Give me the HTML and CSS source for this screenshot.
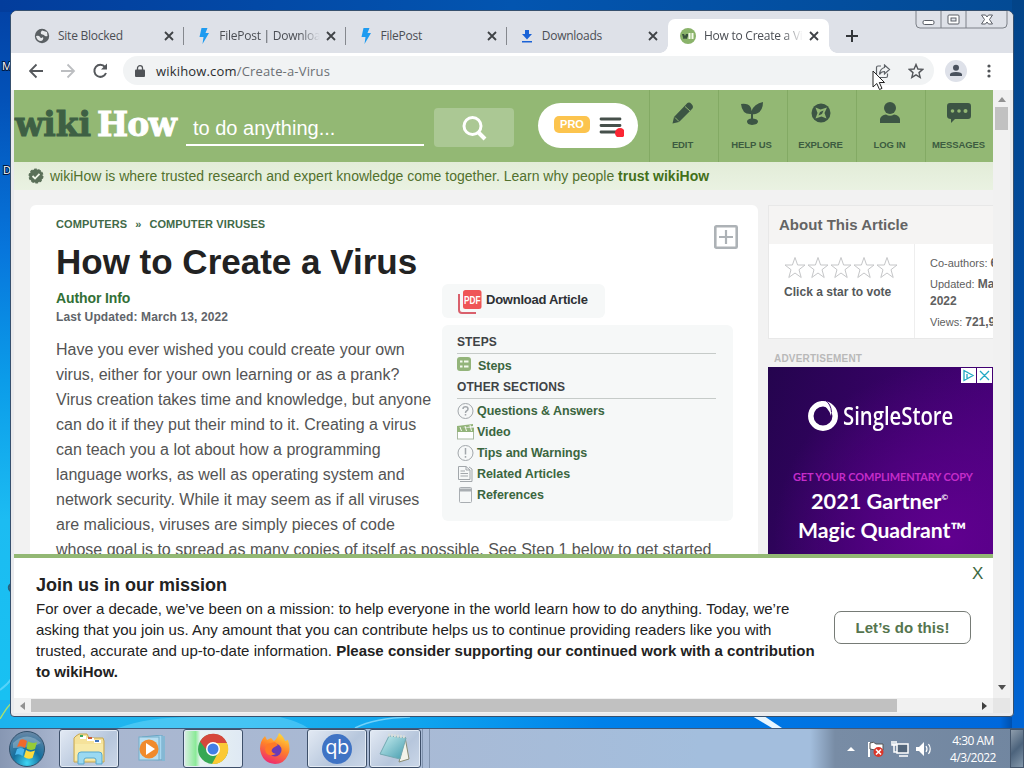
FILE: index.html
```html
<!DOCTYPE html>
<html lang="en">
<head>
<meta charset="utf-8">
<title>How to Create a Virus</title>
<link rel="stylesheet" href="styles.css">
</head>
<body>
<div class="desktop">
  <svg class="wallpaper" width="1024" height="768" viewBox="0 0 1024 768">
    <path d="M0 719Q6 708 14 700" stroke="#a8e070" stroke-width="1.5" fill="none"/>
    <path d="M0 690Q8 684 12 678" stroke="#7fe0ff" stroke-width="2" fill="none" opacity=".6"/>
    <path d="M118 728Q150 716 200 717H280Q300 722 308 728Z" fill="#8ee6ff" opacity=".35"/>
    <path d="M355 728Q375 718 410 717" stroke="#9ae2ff" stroke-width="1.5" fill="none" opacity=".7"/>
    <path d="M752 716L764 716 782 728 772 728Z" fill="#e8f6ff"/>
    <text class="shortcut" x="2" y="70">M</text>
    <text class="shortcut" x="3" y="174">D</text>
    <path d="M12 584Q8 585 9 589L12 593" stroke="#28607c" stroke-width="2" fill="none"/>
  </svg>

  <main class="window">
    <div class="tabstrip">
      <div class="tab">
        <svg class="favicon" viewBox="0 0 16 16"><circle cx="8" cy="8" r="7.2" fill="#5a5f63"/><path d="M2 8Q5 7 6 9T9 9Q10 12 7 13Q3 13 2 8ZM8 2.5L13 4 13.5 8Q11 9 10 7L7 6Q6 4 8 2.5Z" fill="#e6e8eb"/></svg>
        <span class="tab-title">Site Blocked</span>
        <svg class="tab-close" viewBox="0 0 10 10"><path d="M1 1L9 9M9 1L1 9"/></svg>
      </div>
      <div class="tab">
        <svg class="favicon" viewBox="0 0 16 16"><path d="M6.500 0H12.500L10.500 5H14L7.500 16 8.500 9H4.500Z" fill="#1e9bf0"/></svg>
        <span class="tab-title fade">FilePost | Download</span>
        <svg class="tab-close" viewBox="0 0 10 10"><path d="M1 1L9 9M9 1L1 9"/></svg>
      </div>
      <div class="tab">
        <svg class="favicon" viewBox="0 0 16 16"><path d="M6.500 0H12.500L10.500 5H14L7.500 16 8.500 9H4.500Z" fill="#1e9bf0"/></svg>
        <span class="tab-title">FilePost</span>
        <svg class="tab-close" viewBox="0 0 10 10"><path d="M1 1L9 9M9 1L1 9"/></svg>
      </div>
      <div class="tab last">
        <svg class="favicon" viewBox="0 0 16 16"><path d="M7 2H11V6H14L9 11.500 4 6H7ZM4 13H14V14.500H4Z" fill="#1a62d6"/></svg>
        <span class="tab-title">Downloads</span>
        <svg class="tab-close" viewBox="0 0 10 10"><path d="M1 1L9 9M9 1L1 9"/></svg>
      </div>
      <div class="tab active">
        <svg class="favicon" viewBox="0 0 16 16"><circle cx="8" cy="8" r="8" fill="#8ab36a"/><path d="M2 6H4L5 8 6 6H8V8L6.500 11H5.500L5 9.500 4.500 11H3.500Z" fill="#39523c"/><path d="M8.500 5H10.500V11H8.500ZM11.500 5H13.500V11H11.500Z" fill="#f4fbe9"/></svg>
        <span class="tab-title fade">How to Create a Virus</span>
        <svg class="tab-close" viewBox="0 0 10 10"><path d="M1 1L9 9M9 1L1 9"/></svg>
      </div>
      <svg class="new-tab" width="12" height="12" viewBox="0 0 12 12"><path d="M6 0V12M0 6H12" stroke="#33363a" stroke-width="2"/></svg>
      <svg class="caption" width="94" height="18" viewBox="0 0 94 18">
        <path d="M1 0V13Q1 17 5 17H88Q92 17 92 13V0M26 0V17M51 0V17" fill="none" stroke="#7c8088"/>
        <rect x="8" y="9.500" width="11" height="4" rx="1.500" fill="#fff" stroke="#5b5f67"/>
        <rect x="33" y="4" width="11" height="9" rx="1" fill="#fff" stroke="#5b5f67"/><rect x="36" y="7" width="5" height="3" fill="#e4e7ee" stroke="#5b5f67"/>
        <path d="M66.500 4H70.500L72 6 73.500 4H77.500L74.500 8.500 77.500 13H73.500L72 11 70.500 13H66.500L69.500 8.500Z" fill="#fff" stroke="#5b5f67"/>
      </svg>
    </div>

    <div class="toolbar">
      <svg class="nav-buttons" width="94" height="18" viewBox="0 0 94 18" fill="none" stroke-width="1.800">
        <path d="M14 9H1M7.500 2.500L1 9 7.500 15.500" stroke="#55585c"/>
        <path d="M32 9H45M38.500 2.500L45 9 38.500 15.500" stroke="#bcbec1"/>
        <path d="M76 5A6 6 0 1 0 77 11" stroke="#55585c" stroke-width="2"/><path d="M78 1.500V7.500H72Z" fill="#55585c"/>
      </svg>
      <div class="omnibox">
        <svg width="10" height="12" viewBox="0 0 10 12"><path d="M1 4.500H9Q10 4.500 10 5.500V11Q10 12 9 12H1Q0 12 0 11V5.500Q0 4.500 1 4.500Z" fill="#505357"/><path d="M2.500 5V3A2.500 2.300 0 0 1 7.500 3V5" fill="none" stroke="#505357" stroke-width="1.300"/></svg>
        <span class="url">wikihow.com<span class="path">/Create-a-Virus</span></span>
        <svg class="share" width="16" height="16" viewBox="0 0 16 16" fill="none" stroke="#5f6368" stroke-width="1.200"><path d="M6 3H3Q1.500 3 1.500 4.500V13Q1.500 14.500 3 14.500H11Q12.500 14.500 12.500 13V10.500"/><path d="M9.500 2L14.500 6.500 9.500 11V8.500Q6 8.500 4.500 11.500Q5 5.500 9.500 4.500Z"/></svg>
        <svg width="16" height="16" viewBox="0 0 16 16"><path d="M8 1.500L9.900 6 14.700 6.400 11 9.600 12.200 14.400 8 11.800 3.800 14.400 5 9.600 1.300 6.400 6.100 6Z" fill="none" stroke="#55585c" stroke-width="1.400"/></svg>
      </div>
      <svg class="profile" width="22" height="22" viewBox="0 0 22 22"><circle cx="11" cy="11" r="11" fill="#dee1e9"/><circle cx="11" cy="7.700" r="3" fill="#4a525e"/><path d="M5 16V14.500Q5 12 11 12T17 14.500V16Z" fill="#4a525e"/></svg>
      <svg width="4" height="14" viewBox="0 0 4 14" fill="#505357"><circle cx="2" cy="2" r="1.600"/><circle cx="2" cy="7" r="1.600"/><circle cx="2" cy="12" r="1.600"/></svg>
    </div>

    <div class="viewport">
      <div class="page">
        <header class="site-header">
          <div class="logo"><span class="wiki">wiki</span><span class="how">How</span></div>
          <div class="search-field">to do anything...</div>
          <div class="search-button"><svg width="26" height="26" viewBox="0 0 26 26" fill="none" stroke="#fff"><circle cx="11.500" cy="11" r="8.500" stroke-width="3"/><path d="M17.500 17.500L24 24" stroke-width="4"/></svg></div>
          <div class="pro-pill">
            <span class="pro">PRO</span>
            <svg width="26" height="22" viewBox="0 0 26 22"><path d="M3 4H22M3 10.500H22M3 17H19" stroke="#46504b" stroke-width="2.800" stroke-linecap="round"/><circle cx="22" cy="18" r="5" fill="#fb2633"/></svg>
          </div>
          <nav class="site-nav">
            <div class="nav-item"><svg viewBox="0 0 24 24"><path d="M1.500 22.500L3 16 15 3.500Q17.500 0 20.500 3T20.500 8.500L8 21Z" fill="#3c5544"/><path d="M4 16.500L8 20.500M14 5.500L19 10" stroke="#93b874" stroke-width="1"/></svg><span>EDIT</span></div>
            <div class="nav-item"><svg viewBox="0 0 24 24" fill="#3c5544"><path d="M1 3Q8 2 10.500 6 11.500 8 11.500 10 14 3 23 1 23 10 17 12.500 15 13.500 13 13.200V17.500Q18 18 18 20.500 18 23.500 12 24 7 23.500 7 20.500 7 18.500 11 17.500V13Q2 13.500 1 3Z"/></svg><span>HELP US</span></div>
            <div class="nav-item"><svg viewBox="0 0 24 24"><circle cx="12" cy="12" r="9.500" fill="#3c5544"/><path d="M6.500 6.500L11.500 8.500 18 6.500 15.500 12 17.500 17.500 12.500 15.500 6.500 17.500 8.500 12Z" fill="#93b874"/><path d="M9.500 14.500L11 11 14.500 9.500 13 13Z" fill="#3c5544"/></svg><span>EXPLORE</span></div>
            <div class="nav-item"><svg viewBox="0 0 24 24" fill="#3c5544"><circle cx="12" cy="7" r="6"/><path d="M2 22V18Q3 14 8 13.500 12 16 16 13.500 21 14 22 18V22Z"/></svg><span>LOG IN</span></div>
            <div class="nav-item"><svg viewBox="0 0 24 24"><path d="M3 2H21Q24 2 24 5V15Q24 18 21 18H8L4 22V18Q0 18 0 15V5Q0 2 3 2Z" fill="#3c5544"/><g fill="#93b874"><circle cx="5.500" cy="10" r="1.800"/><circle cx="12" cy="10" r="1.800"/><circle cx="18.500" cy="10" r="2"/></g></svg><span>MESSAGES</span></div>
          </nav>
        </header>
        <div class="trust-bar">
          <svg width="16" height="16" viewBox="0 0 16 16"><circle cx="8" cy="8" r="6.800" fill="#5a7058" stroke="#5a7058" stroke-width="1.400" stroke-dasharray="2.700 1.570"/><path d="M4.500 8L7 10.500 11.500 5.800" fill="none" stroke="#eef5e6" stroke-width="1.800"/></svg>
          <span>wikiHow is where trusted research and expert knowledge come together. Learn why people <b>trust wikiHow</b></span>
        </div>
        <div class="content">
          <article class="card">
            <div class="breadcrumb">COMPUTERS<i>»</i>COMPUTER VIRUSES</div>
            <div class="title-row">
              <h1>How to Create a Virus</h1>
              <svg class="expand" width="24" height="24" viewBox="0 0 24 24" fill="none" stroke="#adb2b6"><rect x="1.300" y="1.300" width="21.400" height="21.400" rx="1" stroke-width="2.600"/><path d="M12 5V19M5 12H19" stroke-width="2.200"/></svg>
            </div>
            <div class="columns">
              <div class="intro">
                <div class="author">Author Info</div>
                <div class="updated">Last Updated: March 13, 2022</div>
                <p>Have you ever wished you could create your own<br>virus, either for your own learning or as a prank?<br>Virus creation takes time and knowledge, but anyone<br>can do it if they put their mind to it. Creating a virus<br>can teach you a lot about how a programming<br>language works, as well as operating system and<br>network security. While it may seem as if all viruses<br>are malicious, viruses are simply pieces of code<br>whose goal is to spread as many copies of itself as possible. See Step 1 below to get started</p>
              </div>
              <div class="side">
                <div class="download">
                  <svg width="24" height="24" viewBox="0 0 24 24"><path d="M1 4V20Q1 23 4 23H18" fill="none" stroke="#d9606c" stroke-width="2"/><rect x="5" y="0" width="18.500" height="19" rx="2.500" fill="#ef5557"/><text class="pdf" x="6" y="13.500" textLength="16.500" lengthAdjust="spacingAndGlyphs">PDF</text></svg>
                  <span>Download Article</span>
                </div>
                <div class="toc">
                  <h2>STEPS</h2>
                  <a class="steps"><svg viewBox="0 0 18 18"><rect x="0" y="0" width="14" height="14" rx="3" fill="#93b47a"/><path d="M3 4.500H5.500M7 4.500H11.500M3 9.500H5.500M7 9.500H11.500" stroke="#f5faef" stroke-width="2"/></svg>Steps</a>
                  <h2 class="other">OTHER SECTIONS</h2>
                  <a><svg viewBox="0 0 18 18" fill="none" stroke="#a2a7ab"><circle cx="8.500" cy="9" r="7.500"/><path d="M6 7Q6 4.800 8.500 4.800T11 7Q11 8.300 9.500 9 8.500 9.500 8.500 11" stroke-width="1.500"/><path d="M8.500 12V13.500" stroke-width="1.500"/></svg>Questions &amp; Answers</a>
                  <a><svg viewBox="0 0 18 18"><rect x=".5" y="5" width="16" height="11" fill="#fff" stroke="#a9b9a0"/><path d="M0 3L16 1V3L5 5H17V9H0Z" fill="#93b47a"/><path d="M3 4L4.500 8M8 3L9.500 8M13 2L14.500 8" stroke="#f5faef"/></svg>Video</a>
                  <a><svg viewBox="0 0 18 18" fill="none" stroke="#a2a7ab"><circle cx="8.500" cy="9" r="7.500"/><path d="M8.500 4V10.500M8.500 12V13.800" stroke-width="1.500"/></svg>Tips and Warnings</a>
                  <a><svg viewBox="0 0 18 18" fill="none" stroke="#a2a7ab"><path d="M1.500 1.500H9L13 5V14.500H1.500ZM9 1.500V5H13M3.500 6H8M3.500 8.500H11M3.500 11H11M3 16.500H15V4L12 2"/></svg>Related Articles</a>
                  <a><svg viewBox="0 0 18 18" fill="none" stroke="#a9aeb2"><rect x="2.500" y="1.500" width="12" height="15" rx="1"/><path d="M2.500 4H14.500" stroke-width="3"/></svg>References</a>
                </div>
              </div>
            </div>
          </article>
          <aside class="sidebar">
            <section class="about">
              <h3>About This Article</h3>
              <div class="about-body">
                <div class="rating">
                  <svg width="116" height="24" viewBox="0 0 116 24" fill="#fff" stroke="#c5c6c8"><path id="star" d="M12 1.500L14.600 9H22L16 13.700 18.200 21.500 12 17 5.800 21.500 8 13.700 2 9H9.400Z"/><use href="#star" x="23"/><use href="#star" x="46"/><use href="#star" x="69"/><use href="#star" x="92"/></svg>
                  <div>Click a star to vote</div>
                </div>
                <div class="stats"><div>Co-authors: <b>64</b></div><div>Updated: <b>March 13,<br>2022</b></div><div>Views: <b>721,963</b></div></div>
              </div>
            </section>
            <div class="ad-label">ADVERTISEMENT</div>
            <div class="ad">
              <svg class="ad-choices" width="33" height="15" viewBox="0 0 33 15"><path d="M0 0H15V15H0ZM16 0H31V15H16Z" fill="#fff"/><path d="M3 2.500V12.500L12 7.500ZM6 6V11M6 3.500V5M19 3L28 12M28 3L19 12" fill="none" stroke="#20a8c4" stroke-width="1.300"/></svg>
              <div class="ad-brand"><svg width="32" height="32" viewBox="0 0 32 32"><circle cx="16" cy="16" r="12.200" fill="none" stroke="#fff" stroke-width="5.500"/><path d="M14 1Q26 4 24 16Q21 6 14 5Z" fill="#fff"/><path d="M18 0Q24 4 24.500 12" stroke="#3e0870" fill="none"/></svg><span>SingleStore</span></div>
              <div class="ad-kicker">GET YOUR COMPLIMENTARY COPY</div>
              <div class="ad-line one">2021 Gartner<sup>©</sup></div>
              <div class="ad-line two">Magic Quadrant™</div>
            </div>
          </aside>
        </div>
        <section class="banner">
          <div class="message">
            <h2>Join us in our mission</h2>
            <p>For over a decade, we’ve been on a mission: to help everyone in the world learn how to do anything. Today, we’re<br>asking that you join us. Any amount that you can contribute helps us to continue providing readers like you with<br>trusted, accurate and up-to-date information. <b>Please consider supporting our continued work with a contribution<br>to wikiHow.</b></p>
          </div>
          <div class="cta">Let’s do this!</div>
          <div class="dismiss">X</div>
        </section>
      </div>
      <div class="vscroll"><svg width="8" height="5" viewBox="0 0 8 5"><path d="M0 5L4 0 8 5Z" fill="#929292"/></svg><div class="vthumb"></div><svg class="down" width="8" height="5" viewBox="0 0 8 5"><path d="M0 0H8L4 5Z" fill="#505050"/></svg></div>
      <div class="hscroll"><svg width="5" height="8" viewBox="0 0 5 8"><path d="M5 0V8L0 4Z" fill="#929292"/></svg><div class="hthumb"></div><svg class="right" width="5" height="8" viewBox="0 0 5 8"><path d="M0 0V8L5 4Z" fill="#404040"/></svg></div>
      <div class="corner"></div>
    </div>
  </main>

  <footer class="taskbar">
    <div class="start"><svg width="38" height="38" viewBox="0 0 38 38"><defs><radialGradient id="orb" cx=".5" cy=".9" r=".9"><stop offset="0" stop-color="#3ed6f4"/><stop offset=".45" stop-color="#156f9e"/><stop offset="1" stop-color="#6a88a6"/></radialGradient></defs><circle cx="19" cy="19" r="17.500" fill="url(#orb)" stroke="#31506b"/><path d="M5 13Q19 0 33 13Q25 18 5 18Z" fill="#fff" opacity=".25"/><path d="M12 10Q15 8 19 11L17 18Q13 15 9 17Z" fill="#f0692c"/><path d="M20 11.500Q25 14 29 12L27 19Q22 21 18.500 18.500Z" fill="#96cb38"/><path d="M9 19Q13 17 16.500 19.500L14.500 26Q11 23 7 25Z" fill="#4ab8ef"/><path d="M18 20Q22 23 27 20.500L24.500 28Q20 30 16 27Z" fill="#fddb3d"/></svg></div>
    <div class="task folder open"><svg width="34" height="32" viewBox="0 0 34 32"><path d="M4 3L7 1H15L17 5H31L32 8V29H2V5Z" fill="#f5e29a" stroke="#c7a64c"/><path d="M8 3H14V6H8ZM15 5H22V8H15ZM22 7H29V10H22Z" fill="#fff"/><path d="M8 2H11V4H8Z" fill="#42a75c"/><path d="M16 4H20V6H16Z" fill="#cf5d36"/><path d="M23 7H27V9H23Z" fill="#4274bb"/><path d="M3 11H31V27H3Z" fill="#f8eaa9"/><path d="M6 31V22Q6 19 9 19H27Q30 19 30 22V31H24V27Q24 25 22 25H14Q12 25 12 27V31Z" fill="#9ad9f1" stroke="#56a8cf"/></svg></div>
    <div class="task plain media"><svg width="30" height="28" viewBox="0 0 30 28"><path d="M4 2L24 0V25L4 24Z" fill="#a9d7ef" stroke="#6aa4c4"/><path d="M24 1H27V26H24Z" fill="#84b8d4"/><rect x="1" y="2" width="20" height="23" fill="#b8def1" stroke="#72aeca"/><circle cx="11" cy="14" r="9.500" fill="#f08a2c"/><path d="M8 8V20L17 14Z" fill="#fff"/></svg></div>
    <div class="task chrome open"><svg width="32" height="32" viewBox="0 0 32 32"><circle cx="16" cy="16" r="15" fill="#36a853"/><path d="M3 8.500A15 15 0 0 1 30 10H16Q10 10 9.500 17Z" fill="#d6473b"/><path d="M30 10A15 15 0 0 1 15 31L22 18Q23 13 18 10Z" fill="#fbc934"/><circle cx="16" cy="16" r="7" fill="#fff"/><circle cx="16" cy="16" r="5.500" fill="#427fe6"/></svg></div>
    <div class="task plain"><svg width="32" height="34" viewBox="0 0 32 34"><defs><linearGradient id="fox" x1=".8" y1="0" x2=".4" y2="1"><stop offset="0" stop-color="#ffe23d"/><stop offset=".5" stop-color="#ff812b"/><stop offset="1" stop-color="#ef2b6e"/></linearGradient></defs><path d="M1 17Q1 9 6 4L8 8 12 6 15 9Q18 7 20 1Q25 5 26 9L29 8Q32 18 29 23Q25 32 16 32Q3 31 1 17Z" fill="url(#fox)"/><circle cx="16" cy="18" r="6.500" fill="#6a3cb6"/><path d="M8 12L16 10 19 13 14 16Q10 20 17 22Q7 26 6 17Z" fill="#ff7a26"/></svg></div>
    <div class="task open"><div class="qb">qb</div></div>
    <div class="task notepad open"><svg width="34" height="32" viewBox="0 0 34 32"><defs><linearGradient id="note" x1="0" y1="0" x2="1" y2="1"><stop offset="0" stop-color="#c9eff1"/><stop offset="1" stop-color="#459cae"/></linearGradient></defs><path d="M27 4L31 26 21 29Z" fill="#f3f3e9" stroke="#888a72"/><path d="M11 3L28 5 22 26 2 21Z" fill="url(#note)" stroke="#73a9b2"/><path d="M10 2L28 4" stroke="#d8dedb" stroke-width="3" stroke-dasharray="2 1"/></svg></div>
    <div class="stack-edge"></div>
    <div class="tray">
      <svg width="86" height="18" viewBox="0 0 86 18"><path d="M0 11L4 7 8 11Z" fill="#fff"/><path d="M22 2V17" stroke="#fff" stroke-width="2"/><path d="M23 3Q27 1 29 4H36V10H28L23 9Z" fill="#fff" stroke="#555"/><circle cx="31.500" cy="12" r="5" fill="#dc3528"/><path d="M29 9.500L34 14.500M34 9.500L29 14.500" stroke="#fff" stroke-width="1.600"/><rect x="50" y="4" width="11" height="9" fill="#53667b" stroke="#fff" stroke-width="1.500"/><path d="M52 16H61M47 1V7M45 1V5H49V1M47 7V12H50" stroke="#fff" stroke-width="1.500" fill="none"/><path d="M69 7H72L77 2V16L72 11H69Z" fill="#fff"/><path d="M79 6Q81 9 79 12M81.500 4Q85 9 81.500 14" fill="none" stroke="#fff" stroke-width="1.200"/></svg>
      <div class="clock">4:30 AM<br>4/3/2022</div>
      <div class="show-desktop"></div>
    </div>
  </footer>
  <svg class="cursor" width="14" height="21" viewBox="0 0 14 21"><path d="M1 1V17L4.800 13.500 7.500 19.500 10 18.400 7.300 12.500H12.500Z" fill="#fff" stroke="#222"/></svg>
</div>
</body>
</html>
```
FILE: styles.css
```css
* { box-sizing: border-box; }
body { margin: 0; font-family: "Liberation Sans", Arial, sans-serif; }
svg { flex: none; display: block; }
h1, h2, h3, p { margin: 0; }
.desktop {
  position: relative; width: 1024px; height: 768px; overflow: hidden;
  display: flex; flex-direction: column; justify-content: flex-end;
  background:
    linear-gradient(90deg, transparent 1000px, #0050ae 1012px),
    linear-gradient(90deg, #1cb3ee 0, #22b6ee 200px, #0fa4ee 420px, #0081ea 600px, #0068dc 1000px) 0 700px / 100% 68px no-repeat,
    linear-gradient(180deg, #0341a4 0, #0352b8 100px, #0776dc 250px, #0b9ce9 380px, #1cbcf2 520px, #18c1f2 700px);
}
.desktop::before {
  content: ""; position: absolute; left: 0; top: 0; width: 100%; height: 12px;
  background: linear-gradient(90deg, #033d9c, #0355b0 50%, #034a94);
}
.desktop::after {
  content: ""; position: absolute; left: 1012px; top: 0; width: 12px; height: 728px;
  background: linear-gradient(#034488, #0050ae 60%, #0065d6);
}
.wallpaper { position: absolute; left: 0; top: 0; }
.shortcut { font: 11px "Open Sans", sans-serif; fill: #fff; stroke: #001a44; stroke-width: 2px; paint-order: stroke; }

/* Browser window */
.window {
  position: absolute; z-index: 1; left: 10px; top: 10px; width: 1004px; height: 707px;
  border: 1px solid #36506e; border-radius: 7px 7px 4px 4px; background: #e9eaed; padding: 0 3px;
  display: flex; flex-direction: column; overflow: hidden; font-family: "Liberation Sans", sans-serif;
}
.tabstrip { flex: none; display: flex; height: 42px; margin: 0 -3px; padding: 8px 0 0 12px; background: #dee1e8; position: relative; }
.tab {
  flex: none; display: flex; align-items: center; gap: 8px; width: 161.25px; padding: 0 10px 1px 11px; position: relative;
  font: 12px "Open Sans", sans-serif; letter-spacing: -.25px; color: #4b4e54;
}
.tab:not(.last):not(.active)::after { content: ""; position: absolute; right: 0; top: 8px; width: 1px; height: 18px; background: #85888e; }
.tab.active { background: #fff; border-radius: 7px 7px 0 0; padding-left: 12px; }
.tab.active::before, .tab.active::after { content: ""; position: absolute; bottom: 0; width: 8px; height: 8px; }
.tab.active::before { left: -8px; background: radial-gradient(circle at 0 0, transparent 7.500px, #fff 8px); }
.tab.active::after { right: -8px; background: radial-gradient(circle at 100% 0, transparent 7.500px, #fff 8px); }
.favicon { width: 16px; height: 16px; }
.tab-title { flex: 1; overflow: hidden; white-space: nowrap; }
.tab-title.fade { margin-right: -4px; -webkit-mask-image: linear-gradient(90deg, #000 78%, transparent 98%); mask-image: linear-gradient(90deg, #000 78%, transparent 98%); }
.tab-close { width: 10px; height: 10px; fill: none; stroke: #3f4246; stroke-width: 1.800px; }
.new-tab { margin: 11px 0 0 17px; }
.caption { position: absolute; right: 4px; top: 0; }
.toolbar { flex: none; display: flex; align-items: center; height: 37px; margin: 0 -3px; padding: 0 22px 2px 18px; background: #fff; }
.omnibox { flex: 1; display: flex; align-items: center; height: 29px; margin: 0 11px 0 0; padding: 0 10px 0 12px; border-radius: 15px; background: #f1f3f4; }
.url { margin-left: 11px; font: 13px "Open Sans", sans-serif; color: #2b2d30; letter-spacing: .17px; }
.path { color: #6c7074; }
.share { margin: 0 17px 0 auto; }
.profile { margin-right: 20px; }

.viewport { flex: none; display: grid; grid-template-columns: 979px 17px; grid-template-rows: 608px 15px; }
.page { display: flex; flex-direction: column; overflow: hidden; background: #f2f2f2; }
.site-header { flex: none; display: flex; height: 72px; background: #93b874; }
.logo { flex: none; width: 172px; padding: 16px 0 0 1px; font: bold 33px/38px "DejaVu Serif", serif; white-space: nowrap; letter-spacing: -.8px; -webkit-text-stroke: .9px currentColor; }
.wiki { color: #3e6044; margin-right: 6px; letter-spacing: -.1px; }
.how { color: #fff; }
.search-field { flex: none; width: 238px; height: 36px; margin-top: 20px; padding-left: 7px; border-bottom: 2px solid #fff; color: #fff; font-size: 20px; line-height: 36px; }
.search-button { flex: none; display: flex; align-items: center; justify-content: center; width: 80px; height: 39px; margin: 18px 0 0 10px; border-radius: 4px; background: #abc894; }
.pro-pill { flex: none; display: flex; align-items: center; width: 100px; height: 45px; margin: 13px 11px 0 24px; padding-left: 16px; border-radius: 23px; background: #fff; }
.pro { width: 36px; height: 17px; margin: 0 8px 2px 0; border-radius: 5px; background: #fcc44e; color: #fff; font-size: 11px; line-height: 17px; text-align: center; font-weight: bold; }
.site-nav { flex: none; display: flex; }
.nav-item { width: 69px; padding: 11px 3px 0 0; border-left: 1px solid #83aa64; display: flex; flex-direction: column; align-items: center; gap: 14px; color: #3c5c40; font-size: 9.500px; font-weight: bold; line-height: 12px; letter-spacing: -.1px; white-space: nowrap; }
.nav-item svg { width: 24px; height: 24px; }
.trust-bar { flex: none; display: flex; align-items: center; gap: 6px; height: 28px; padding-left: 14px; background: linear-gradient(#e2ecd8, #eaf2e2); color: #52712d; font-size: 14px; white-space: nowrap; }
.trust-bar b { color: #43701a; }
.content { flex: 1; min-height: 0; display: flex; gap: 10px; padding: 15px 0 0 16px; overflow: hidden; }
.card { flex: none; width: 728px; height: 420px; padding: 12px 20px 0 26px; border-radius: 6px; background: #fff; }
.breadcrumb { height: 15px; color: #416a48; font-size: 11px; font-weight: bold; line-height: 14px; letter-spacing: .1px; }
.breadcrumb i { margin: 0 8px; font-style: normal; }
.title-row { display: flex; justify-content: space-between; height: 52px; }
.title-row h1 { color: #222; font-size: 35px; line-height: 60px; white-space: nowrap; }
.expand { margin-top: -7px; }
.columns { display: grid; grid-template-columns: 386px 291px; }
.author { margin-top: 6px; color: #327036; font-size: 14px; font-weight: bold; line-height: 16px; letter-spacing: -.1px; }
.updated { margin-top: 4px; color: #60646a; font-size: 12px; font-weight: bold; line-height: 14px; letter-spacing: .12px; }
.intro p { margin-top: 13px; color: #545454; font-size: 16px; line-height: 25px; white-space: nowrap; }
.download { display: flex; gap: 4px; width: 163px; height: 34px; padding: 6px 0 0 16px; border-radius: 6px; background: #f6f8f8; color: #2d3034; font-size: 13px; font-weight: bold; line-height: 20px; white-space: nowrap; letter-spacing: -.25px; }
.pdf { font: bold 10px "Liberation Sans", sans-serif; fill: #fff; letter-spacing: 0; }
.toc { height: 196px; margin-top: 7px; padding: 9px 17px 0 15px; border-radius: 6px; background: #f6f8f8; }
.toc h2 { height: 20px; border-bottom: 1px solid #c6cbc9; color: #3f4346; font-size: 12px; line-height: 16px; letter-spacing: .1px; }
.toc h2.other { margin: 0 0 1px; padding-top: 2px; height: 22px; line-height: 17px; }
.toc a { display: flex; align-items: center; gap: 2px; height: 21px; color: #3b6640; font-size: 12.500px; font-weight: bold; letter-spacing: -.06px; }
.toc a svg { width: 18px; height: 18px; }
.toc a.steps { height: 23px; gap: 3px; padding-top: 1px; }
.sidebar { flex: none; width: 225px; overflow: hidden; }
.about { height: 134px; border: 1px solid #e8e8e8; border-right: 0; background: #fff; }
.about h3 { height: 38px; padding-left: 10px; background: #f5f4f3; color: #646464; font-size: 15px; line-height: 38px; letter-spacing: .03px; }
.about-body { display: flex; height: 94px; }
.rating { flex: none; width: 146px; padding: 12px 0 0 14px; border-right: 1px solid #eee; color: #54585a; font-size: 12px; font-weight: bold; line-height: 25px; white-space: nowrap; letter-spacing: .03px; }
.rating div { padding-left: 1px; }
.stats { padding: 11px 0 0 15px; color: #606060; font-size: 11px; line-height: 17px; white-space: nowrap; }
.stats b { font-size: 12px; }
.stats div { margin-bottom: 4px; }
.ad-label { height: 28px; padding: 12px 0 0 6px; color: #b9b9b9; font-size: 10px; font-weight: bold; letter-spacing: .2px; line-height: 15px; }
.ad { height: 230px; position: relative; display: flex; flex-direction: column; color: #fff; background: radial-gradient(circle at 80% 75%, #60008f, transparent 70%), linear-gradient(110deg, #24044e, #4e0082); font-family: Lato, sans-serif; white-space: nowrap; }
.ad-choices { position: absolute; right: -1px; top: 1px; }
.ad-brand { display: flex; align-items: center; gap: 4px; margin: 33px 0 0 39px; height: 32px; font: 600 26px "Open Sans", sans-serif; }
.ad-brand span { margin-top: -2px; transform: scaleX(.78); transform-origin: 0 50%; }
.ad-kicker { margin: 37px 0 0 25px; color: #c42cc9; font-size: 11px; font-weight: bold; line-height: 16px; letter-spacing: -.12px; }
.ad-line { font-size: 22px; font-weight: bold; line-height: 29px; }
.ad-line.one { margin: 2px 0 0 43px; font-size: 21.700px; }
.ad-line.two { margin-left: 30px; font-size: 21.200px; }
.ad-line sup { font-size: 8px; vertical-align: 9px; line-height: 0; }

.banner { flex: none; display: flex; position: relative; height: 144px; padding: 17px 0 0 22px; border-top: 4px solid #93b874; background: #fff; color: #222; }
.message { flex: none; width: 798px; white-space: nowrap; }
.message h2 { font-size: 18px; line-height: 21px; }
.message p { margin-top: 2px; font-size: 15px; line-height: 21px; }
.cta { flex: none; width: 137px; height: 33px; margin-top: 36px; border: 1px solid #767b76; border-radius: 7px; color: #55754e; font-size: 15px; font-weight: bold; line-height: 32px; text-align: center; letter-spacing: .1px; }
.dismiss { margin: -11px 0 0 1px; color: #3c683f; font-size: 17px; line-height: 20px; }
.vscroll { display: flex; flex-direction: column; align-items: center; padding: 7px 0 8px; background: #f1f1f1; }
.vthumb { width: 13px; height: 23px; margin-top: 5px; background: #c1c1c1; }
.down { margin-top: auto; }
.hscroll { display: flex; align-items: center; padding: 0 6px; background: #f1f1f1; }
.hthumb { width: 866px; height: 13px; margin-left: 6px; background: #c1c1c1; }
.right { margin-left: auto; }
.corner { background: #e6e6e6; }

/* Taskbar */
.taskbar { position: relative; z-index: 2; display: flex; height: 40px; border-top: 1px solid #40597a; background: linear-gradient(90deg, #8797b3 0, #a9b6cf 60px, #a9bad5 400px, #a3bedd 700px, #a3bedd 810px, #788ca5 835px, #7186a0 100%); }
.start { width: 59px; display: flex; justify-content: center; align-items: center; padding-right: 5px; }
.task { display: flex; align-items: center; justify-content: center; width: 60px; height: 39px; margin-right: 2px; border: 1px solid transparent; }
.task.open { border-color: #3e506a; border-radius: 3px; background: linear-gradient(135deg, #e3eaf4, #b6c6dc 60%, #cbd7e8); box-shadow: inset 0 0 0 1px #e3ebf5; }
.task.media { padding-left: 3px; }
.task.chrome { background: linear-gradient(90deg, #dcefe5, #8bea98 20%, #e8f2f2 28%, #dfe9f4); }
.qb { width: 30px; height: 30px; border-radius: 50%; background: #3f73c4; color: #fff; font: 20px/26px "Open Sans", sans-serif; text-align: center; letter-spacing: -.5px; }
.task.notepad { width: 52px; margin-right: 0; }
.stack-edge { width: 8px; border: solid #8093ae; border-width: 0 1px; margin-left: 1px; }
.tray { flex: 1; display: flex; align-items: center; justify-content: flex-end; color: #fff; }
.tray > svg { margin-right: -2px; }
.clock { width: 58px; margin: 1px 8px 0 13px; font: 12px/17px "Open Sans", sans-serif; letter-spacing: -.5px; text-align: center; white-space: nowrap; }
.show-desktop { width: 14px; height: 39px; border: 1px solid #44566c; background: linear-gradient(135deg, #8e9dac, #4c637c 50%, #8498ab); }
.cursor { position: absolute; z-index: 3; left: 872px; top: 70px; }
```
